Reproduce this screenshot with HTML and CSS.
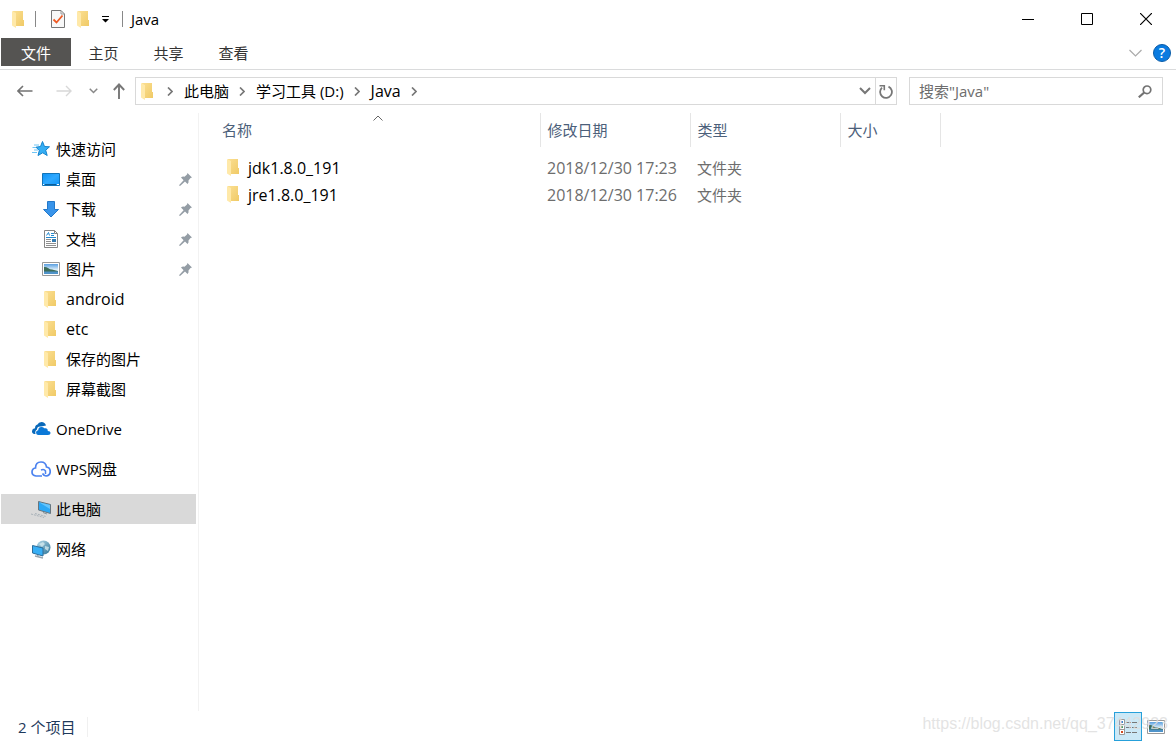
FILE: index.html
```html
<!DOCTYPE html>
<html lang="zh-CN">
<head>
<meta charset="utf-8">
<title>Java</title>
<link rel="stylesheet" href="styles.css">
</head>
<body>
<svg class="defs" width="0" height="0" aria-hidden="true">
  <defs>
    <linearGradient id="gold" x1="0" y1="0" x2="1" y2="1"><stop offset="0" stop-color="#fbdf92"/><stop offset="1" stop-color="#f0ca66"/></linearGradient>
    <linearGradient id="screen" x1="0" y1="0" x2="1" y2="1"><stop offset="0" stop-color="#0f92f5"/><stop offset=".5" stop-color="#2fa9ff"/><stop offset="1" stop-color="#0f94f7"/></linearGradient>
    <linearGradient id="sky" x1="0" y1="0" x2="0" y2="1"><stop offset="0" stop-color="#5a9fe0"/><stop offset=".6" stop-color="#e4f3fb"/></linearGradient>
    <linearGradient id="globe" x1="0" y1="0" x2="1" y2="1"><stop offset="0" stop-color="#b9dcea"/><stop offset="1" stop-color="#2c7397"/></linearGradient>
  </defs>
  <symbol id="folder" viewBox="0 0 12 17"><path d="M1 0h10v9h1v6H3L1 14z" fill="url(#gold)"/><path d="M0 0l4 2v15l-4-2.500z" fill="#ffe9a9"/></symbol>
  <symbol id="picture" viewBox="0 0 18 14"><path d="M.5.5h17v13H.5z" fill="#fff" stroke="#999"/><path d="M2 2h14v10H2z" fill="url(#sky)"/><path d="M2 5q2-.5 4 1t4 1.500l6 1.500v1H2z" fill="#3c6c58"/><path d="M2 9.500h14V12H2z" fill="#4f93c9"/></symbol>
  <symbol id="pin" viewBox="0 0 13 13"><path d="M8.500 0L13 4.500l-1.500.5-2 2.500q.5 2-1 3.500L6 8.600 1 13 0 12.200 4.600 7.200 2 4.500q1.500-1.400 3.500-.8L8 1.500z" fill="#949da5"/></symbol>
  <symbol id="crumb" viewBox="0 0 6 9"><path d="M1 .5l4 4-4 4" fill="none" stroke="#777" stroke-width="1.700"/></symbol>
  <symbol id="chevron" viewBox="0 0 12 8"><path d="M1 1l5 5 5-5" fill="none" stroke="currentColor" stroke-width="2"/></symbol>
</svg>
<div class="window">
  <header class="titlebar">
    <svg class="folder" width="12" height="17"><use href="#folder"/></svg>
    <span class="rule"></span>
    <button class="plain" aria-label="属性"><svg width="14" height="18" viewBox="0 0 14 18"><path d="M.5.5h9.500l3.500 3.500v13.500H.5z" fill="#f8f8f8" stroke="#777"/><path d="M10 .5V4h3.500" fill="none" stroke="#999"/><path d="M2.500 9.500l3 3 6-7" fill="none" stroke="#ee5a24" stroke-width="1.800"/></svg></button>
    <button class="plain" aria-label="新建文件夹"><svg width="12" height="17"><use href="#folder"/></svg></button>
    <button class="plain" aria-label="自定义快速访问工具栏"><svg width="7" height="7" viewBox="0 0 7 7"><path d="M0 0h7v1H0zM0 3h7L3.500 6.500z"/></svg></button>
    <span class="rule second"></span>
    <h1>Java</h1>
    <div class="captions">
      <button aria-label="最小化"><svg width="12" height="13" viewBox="0 0 12 13"><path d="M0 6.500h12" stroke="#000"/></svg></button>
      <button aria-label="最大化"><svg width="12" height="12" viewBox="0 0 12 12"><path d="M.5.5h11v11H.5z" fill="none" stroke="#000"/></svg></button>
      <button aria-label="关闭"><svg width="12" height="12" viewBox="0 0 12 12"><path d="M0 0l12 12M12 0L0 12" stroke="#000" stroke-width="1.200"/></svg></button>
    </div>
  </header>
  <nav class="ribbon">
    <button class="tab file">文件</button>
    <button class="tab">主页</button>
    <button class="tab">共享</button>
    <button class="tab">查看</button>
    <div class="ribbon-end">
      <button class="plain" aria-label="展开功能区"><svg width="13" height="8" viewBox="0 0 13 8"><path d="M.5 1l6 6 6-6" fill="none" stroke="#aaa" stroke-width="1.200"/></svg></button>
      <button class="help" aria-label="帮助">?</button>
    </div>
  </nav>
  <div class="location">
    <div class="history">
      <button class="plain" aria-label="后退"><svg width="16" height="12" viewBox="0 0 16 12"><path d="M15.500 6H1M6 1L1 6l5 5" fill="none" stroke="#737373" stroke-width="1.600"/></svg></button>
      <button class="plain forward" aria-label="前进"><svg width="16" height="12" viewBox="0 0 16 12"><path d="M.5 6H15M10 1l5 5-5 5" fill="none" stroke="#d8d8d8" stroke-width="1.400"/></svg></button>
      <button class="plain recent" aria-label="最近浏览的位置"><svg width="9" height="6" viewBox="0 0 12 8"><use href="#chevron"/></svg></button>
      <button class="plain up" aria-label="上移"><svg width="12" height="16" viewBox="0 0 12 16"><path d="M6 16V1.500M.8 7L6 1.500 11.200 7" fill="none" stroke="#777" stroke-width="1.900"/></svg></button>
    </div>
    <div class="boxes">
      <div class="address">
        <svg class="folder" width="12" height="17"><use href="#folder"/></svg>
        <svg class="sep" width="6" height="9"><use href="#crumb"/></svg>
        <a href="#">此电脑</a>
        <svg class="sep" width="6" height="9"><use href="#crumb"/></svg>
        <a href="#">学习工具 (D:)</a>
        <svg class="sep" width="6" height="9"><use href="#crumb"/></svg>
        <a class="latin" href="#">Java</a>
        <svg class="sep" width="6" height="9"><use href="#crumb"/></svg>
        <div class="address-end">
          <button class="plain" aria-label="以前的位置"><svg width="12" height="8"><use href="#chevron"/></svg></button>
          <button class="plain refresh" aria-label="刷新"><svg width="14" height="15" viewBox="0 0 14 15"><path d="M9.500 2.600A5.900 5.900 0 1 1 3 3.600" fill="none" stroke="#777" stroke-width="1.800"/><path d="M.5 1.700h4.800v4.600" fill="none" stroke="#777" stroke-width="1.600"/></svg></button>
        </div>
      </div>
      <label class="search">
        <input type="text" placeholder="搜索&quot;Java&quot;" aria-label="搜索">
        <svg width="14" height="13" viewBox="0 0 14 13"><circle cx="9" cy="4.800" r="3.800" fill="none" stroke="#737373" stroke-width="1.700"/><path d="M6.200 7.500L.8 12.300" stroke="#737373" stroke-width="2.200"/></svg>
      </label>
    </div>
  </div>
  <div class="body">
    <nav class="sidebar">
      <a class="root" href="#"><svg width="20" height="18" viewBox="0 0 20 18"><path d="M11.500 1.500l2 5 5 .3-3.800 3.400 1.500 5.300-4.500-2.700L7 15.500l1.300-5L5 7.200l4.500-.7z" fill="#35aef4" stroke="#1583cc"/><path d="M3 5h5M1.500 7.500H5M3 10h4M1 12.500h5" stroke="#70c5f5"/></svg>快速访问</a>
      <a class="leaf" href="#"><svg width="18" height="13" viewBox="0 0 18 13"><path d="M.5.5h17v12H.5z" fill="url(#screen)" stroke="#1274b8"/><path d="M1 11.500h1M3 11.500h11M15 11.500h2" stroke="#0b5c96"/><path d="M1 11.500h1M15 11.500h2" stroke="#fff"/></svg>桌面<svg class="pin" width="13" height="13"><use href="#pin"/></svg></a>
      <a class="leaf" href="#"><svg width="18" height="17" viewBox="0 0 18 17"><path d="M5.500.5h7v8h4L9 16 1.500 8.500h4z" fill="#3894ea" stroke="#2378c9"/></svg>下载<svg class="pin" width="13" height="13"><use href="#pin"/></svg></a>
      <a class="leaf" href="#"><svg width="18" height="18" viewBox="0 0 18 18"><path d="M2.500.5h10l3 3v14h-13z" fill="#fff" stroke="#858585"/><path d="M12.500.5v3h3" fill="none" stroke="#858585"/><path d="M4.500 5.500l2-3 1 3M9 3.500h3M9 5.500h3M4 7.500h10" fill="none" stroke="#2389cf"/><path d="M4 9.500h5M4 11.500h5M4 13.500h10M4 15.500h10" stroke="#8f8f8f"/><path d="M10 9h4v3h-4z" fill="#347aaf"/></svg>文档<svg class="pin" width="13" height="13"><use href="#pin"/></svg></a>
      <a class="leaf" href="#"><svg width="18" height="14"><use href="#picture"/></svg>图片<svg class="pin" width="13" height="13"><use href="#pin"/></svg></a>
      <a class="leaf latin" href="#"><svg class="folder" width="12" height="17"><use href="#folder"/></svg>android</a>
      <a class="leaf latin" href="#"><svg class="folder" width="12" height="17"><use href="#folder"/></svg>etc</a>
      <a class="leaf" href="#"><svg class="folder" width="12" height="17"><use href="#folder"/></svg>保存的图片</a>
      <a class="leaf" href="#"><svg class="folder" width="12" height="17"><use href="#folder"/></svg>屏幕截图</a>
      <a class="root group" href="#"><svg width="20" height="18" viewBox="0 0 20 18"><path d="M3.500 14Q.8 13.500 1 11t3-2.800Q4 5 6.500 4.500q1-2.500 4-2.500 3.500 0 4.500 3.500l-5 1Q6 6 6 9.500 3.500 11 4.500 14z" fill="#0968b9"/><path d="M7 15q-2-.5-2-2.500t2.200-2.300Q7.500 7 10.300 7q2 0 3 1.300 3.500-.8 3.500 2.700 2.700 0 2.700 2.200 0 1.800-2.500 1.800z" fill="#0b78d7"/></svg>OneDrive</a>
      <a class="root group" href="#"><svg width="20" height="18" viewBox="0 0 20 18"><path d="M11 16H5Q1 15.500 1 12t3.500-4Q4.500 2 10 2q4.800 0 5.500 5 3.700.5 3.700 4.500T15 16q-2 0-3.500-2.500" fill="none" stroke="#4b82ef" stroke-width="1.700"/><path d="M10 10q3-1.500 4.500 1v3" fill="none" stroke="#4b82ef" stroke-width="1.500"/></svg>WPS网盘</a>
      <a class="root group current" href="#" aria-current="page"><svg width="20" height="18" viewBox="0 0 20 18"><path d="M7.500 1.500l12 3v9l-12-3.500z" fill="#2ca8f5" stroke="#67757e"/><path d="M8 2.200l11 2.800v4z" fill="#66c4fb"/><path d="M0 14l13 3.500M4 13.500l11 3" stroke="#a9b2b9" fill="none" stroke-dasharray="2 1"/><path d="M12 12.500l4 1.500" stroke="#87939b"/></svg>此电脑</a>
      <a class="root group" href="#"><svg width="20" height="19" viewBox="0 0 20 19"><circle cx="12.500" cy="7.500" r="7" fill="url(#globe)"/><path d="M8 4l4-2 2 2-3 3zM14 6l4 1-1 4-3-2z" fill="#d9edf2" opacity=".75"/><path d="M1.500 5.500l10.500 2.500v8l-10.500-3z" fill="#38aff5" stroke="#2c6d9a"/><path d="M7 15v2M4 16l8 2" stroke="#9aa6af" stroke-width="1.500"/></svg>网络</a>
    </nav>
    <main class="files">
      <table>
        <colgroup><col class="c-name"><col class="c-date"><col class="c-type"><col class="c-size"></colgroup>
        <thead><tr><th>名称<svg class="sort" width="10" height="6" viewBox="0 0 10 6"><path d="M.5 5.500L5 1l4.500 4.500" fill="none" stroke="#666"/></svg></th><th>修改日期</th><th>类型</th><th>大小</th></tr></thead>
        <tbody>
          <tr><td><span class="file-name"><svg width="12" height="17"><use href="#folder"/></svg>jdk1.8.0_191</span></td><td class="date">2018/12/30 17:23</td><td>文件夹</td><td></td></tr>
          <tr><td><span class="file-name"><svg width="12" height="17"><use href="#folder"/></svg>jre1.8.0_191</span></td><td class="date">2018/12/30 17:26</td><td>文件夹</td><td></td></tr>
        </tbody>
      </table>
    </main>
  </div>
  <footer class="status">
    <span class="count">2 个项目</span>
    <div class="views">
      <button class="view active" aria-label="详细信息"><svg width="18" height="16" viewBox="0 0 18 16"><path d="M.5.5h5v15h-5zM.5 5.500h5M.5 10.500h5" fill="#fff" stroke="#999"/><path d="M2 2h2v2H2z" fill="#368bd0"/><path d="M2 7h2v2H2z" fill="#3a9a72"/><path d="M2 12h2v2H2z" fill="#d5491e"/><path d="M7 3.500h5M13 3.500h5M7 8.500h5M13 8.500h5M7 13.500h5M13 13.500h5" stroke="#777"/></svg></button>
      <button class="view" aria-label="大图标"><svg width="18" height="14"><use href="#picture"/></svg></button>
    </div>
    <span class="watermark">https://blog.csdn.net/qq_37442923</span>
  </footer>
</div>
</body>
</html>
```
FILE: styles.css
```css
* { box-sizing: border-box; }
body {
  margin: 0;
  background: #fff;
  color: #000;
  font: 15px/20px "Open Sans", "Noto Sans CJK SC", sans-serif;
}
button, input { font: inherit; color: inherit; }
button { border: 0; padding: 0; background: none; }
a { color: inherit; text-decoration: none; }
svg { display: block; flex: none; }
.defs { position: absolute; }
.plain { display: flex; align-items: center; justify-content: center; }
.latin, .date, .file-name { font-size: 16px; }
.window { display: flex; flex-direction: column; min-height: 100vh; }

.titlebar { display: flex; align-items: center; height: 38px; padding: 0 1px 0 12px; }
.rule { width: 1px; height: 16px; margin: 0 15px 0 11px; background: #888; }
.titlebar .plain { margin-right: 12px; }
.titlebar .plain + .plain { margin-right: 13px; }
.rule.second { margin: 0 8px 0 0; }
h1 { margin: 0; font-size: 15px; font-weight: 400; }
.captions { display: flex; margin-left: auto; height: 100%; }
.captions button { display: flex; align-items: center; justify-content: center; width: 59px; }

.ribbon { display: flex; height: 32px; padding-left: 1px; border-bottom: 1px solid #dadbdc; color: #333; }
.tab { width: 65px; height: 28px; padding-top: 1px; }
.tab.file { width: 70px; background: #555452; color: #fff; }
.ribbon-end { display: flex; align-items: center; gap: 11px; height: 30px; margin-left: auto; padding-right: 5px; }
.help { width: 18px; height: 18px; border: 1px solid #0a5ca8; border-radius: 50%; background: #0a7be0; color: #fff; font-size: 14px; font-weight: 600; line-height: 16px; }

.location { display: flex; align-items: center; padding: 7px 13px 8px 17px; }
.history { display: flex; align-items: center; width: 118px; color: #888; }
.forward { margin-left: 23px; }
.recent { margin-left: 17px; }
.up { margin-left: 15px; }
.boxes { display: grid; grid-template-columns: 3fr 1fr; gap: 12px; flex: 1; }
.address, .search { display: flex; align-items: center; height: 28px; border: 1px solid #d9d9d9; }
.address { padding-left: 5px; }
.address .folder { margin-right: 14px; }
.sep { margin: 0 11px 0 10px; }
.folder + .sep { margin-left: 0; }
.address-end { display: flex; height: 100%; margin-left: auto; color: #777; }
.address-end .plain { width: 20px; }
.address-end .refresh { width: 21px; border-left: 1px solid #d9d9d9; }
.search { padding: 0 10px 0 9px; }
.search input { flex: 1; min-width: 0; padding: 0; border: 0; outline: 0; background: none; }
.search input::placeholder { color: #6d6d6d; opacity: 1; }

.body { display: flex; flex: 1; }
.sidebar { width: 199px; padding: 21px 2px 0 1px; border-right: 1px solid #f2f2f2; }
.sidebar a { display: flex; align-items: center; height: 30px; }
.root { padding-left: 30px; gap: 5px; }
.leaf { padding: 0 4px 0 41px; gap: 6px; }
.leaf .folder { margin: 0 4px 0 2px; }
.pin { margin-left: auto; }
.group { margin-top: 10px; }
.current { background: #d9d9d9; }

.files { flex: 1; min-width: 0; }
table { border-collapse: collapse; table-layout: fixed; width: 741px; color: #6d6d6d; }
.c-name { width: 341px; }
.c-date, .c-type { width: 150px; }
.c-size { width: 100px; }
th, td { padding: 0 0 0 7px; text-align: left; font-weight: 400; white-space: nowrap; }
th:first-child, td:first-child { padding-left: 23px; }
th { position: relative; height: 34px; border-right: 1px solid #e5e5e5; color: #4c607a; }
.sort { position: absolute; top: 2px; left: 51%; }
thead::after { content: ""; display: block; height: 7px; }
td { height: 27px; }
.file-name { display: flex; align-items: center; gap: 9px; padding-left: 5px; color: #000; }

.status { position: relative; display: flex; align-items: center; height: 31px; padding: 0 6px 0 18px; color: #1e395b; }
.count { padding-right: 12px; border-right: 1px solid #f0f0f0; }
.views { display: flex; margin-left: auto; }
.view { display: flex; align-items: center; justify-content: center; width: 28px; height: 29px; border: 1px solid transparent; }
.view.active { border-color: #26a0da; background: #cbe8f6; }
.watermark { position: absolute; right: 8px; top: 3px; color: rgba(222, 222, 222, .85); font: 16px/20px "Liberation Sans", Arial, sans-serif; pointer-events: none; }
```
